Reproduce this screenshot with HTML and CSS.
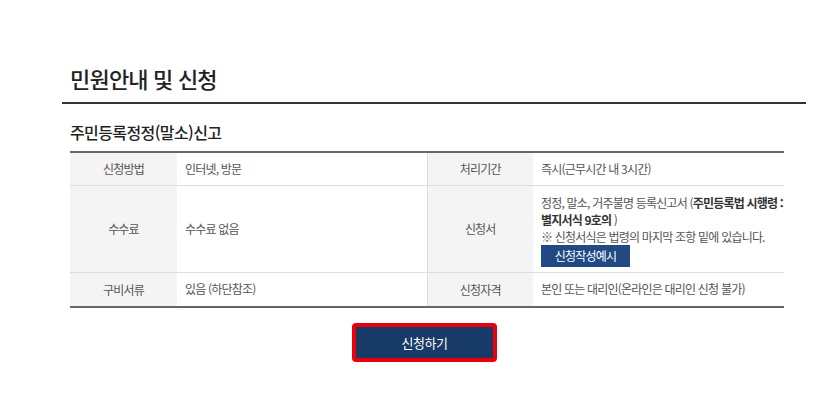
FILE: index.html
```html
<!DOCTYPE html>
<html lang="ko">
<head>
  <meta charset="UTF-8" />
  <meta name="viewport" content="width=device-width, initial-scale=1.0"/>
  <title>민원안내 및 신청</title>
  <link rel="stylesheet" href="styles.css">
</head>
<body>
  <div class="wrap">
    <h1 class="page-title">민원안내 및 신청</h1>
    <div class="content">
      <h2 class="sub-title">주민등록정정(말소)신고</h2>
      <table class="info">
        <colgroup>
          <col class="c-th1"><col class="c-td1"><col class="c-th2"><col class="c-td2">
        </colgroup>
        <tr class="r1">
          <th>신청방법</th>
          <td>인터넷, 방문</td>
          <th>처리기간</th>
          <td>즉시(근무시간 내 3시간)</td>
        </tr>
        <tr class="r2">
          <th>수수료</th>
          <td>수수료 없음</td>
          <th>신청서</th>
          <td class="form-cell">
            <p class="line">정정, 말소, 거주불명 등록신고서 (<strong>주민등록법 시행령 :</strong></p>
            <p class="line"><strong>별지서식 9호의</strong> )</p>
            <p class="line">※ 신청서식은 법령의 마지막 조항 밑에 있습니다.</p>
            <a class="btn-sample" href="#">신청작성예시</a>
          </td>
        </tr>
        <tr class="r3">
          <th>구비서류</th>
          <td>있음 (하단참조)</td>
          <th>신청자격</th>
          <td>본인 또는 대리인(온라인은 대리인 신청 불가)</td>
        </tr>
      </table>
      <div class="actions">
        <a class="btn-apply" href="#"><span>신청하기</span></a>
      </div>
    </div>
  </div>
</body>
</html>
```

FILE: styles.css
```css
body {
  margin: 0;
  background: #fff;
  font-family: "Noto Sans CJK KR", "Noto Sans", sans-serif;
  color: #333;
}
a {
  text-decoration: none;
}
.wrap {
  margin-left: 62px;
  width: 744px;
  padding-top: 61px;
}
.page-title {
  margin: 0;
  padding: 0 0 7px 8px;
  font-size: 22px;
  font-weight: 500;
  line-height: 34px;
  color: #222;
  letter-spacing: -0.8px;
  border-bottom: 2px solid #333;
}
.content {
  padding-left: 8px;
  width: 714px;
}
.sub-title {
  margin: 16px 0 0;
  font-size: 16px;
  font-weight: 500;
  line-height: 24px;
  color: #222;
  letter-spacing: -0.6px;
  padding-bottom: 7px;
}
.info {
  width: 714px;
  border-collapse: collapse;
  table-layout: fixed;
  border-top: 2px solid #666;
  border-bottom: 2px solid #666;
  font-size: 12px;
  letter-spacing: -0.8px;
  color: #555;
}
.c-th1 { width: 107px; }
.c-td1 { width: 250px; }
.c-th2 { width: 106px; }
.c-td2 { width: 251px; }
.info th {
  background: #f4f4f4;
  font-weight: 400;
  text-align: center;
  border-left: 1px solid #ddd;
}
.info th:first-child {
  border-left: none;
}
.info td {
  padding: 0 4px 0 8px;
  line-height: 18px;
}
.info tr + tr th,
.info tr + tr td {
  border-top: 1px solid #ddd;
}
.r1 { height: 33px; }
.r2 { height: 86px; }
.r3 { height: 35px; }
.info .form-cell {
  padding-top: 8px;
  padding-bottom: 5px;
  line-height: 17px;
}
.line {
  margin: 0;
  white-space: nowrap;
}
.info strong {
  color: #333;
  font-weight: 700;
}
.btn-sample {
  display: block;
  width: 89px;
  height: 22px;
  line-height: 22px;
  text-align: center;
  background: #214a85;
  color: #fff;
  font-size: 12px;
}
.actions {
  display: flex;
  justify-content: center;
  padding-top: 15px;
  padding-right: 5px;
}
.btn-apply {
  display: block;
  border: 4px solid #e8000b;
  border-radius: 4px;
}
.btn-apply span {
  display: block;
  width: 137px;
  height: 31px;
  line-height: 31px;
  text-align: center;
  background: #173a66;
  color: #fff;
  font-size: 13px;
  letter-spacing: -0.5px;
}
```
